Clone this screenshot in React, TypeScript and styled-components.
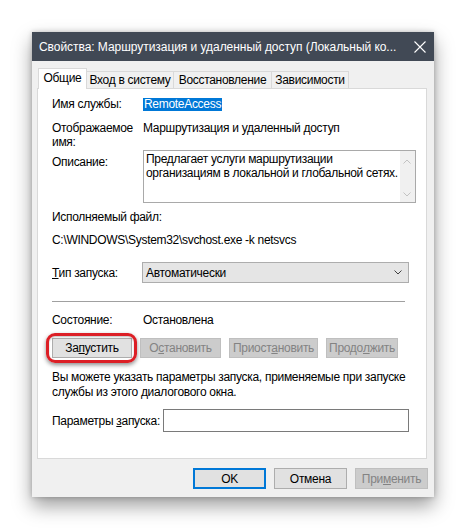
import React from "react";
import styled, { createGlobalStyle } from "styled-components";

const Global = createGlobalStyle`
  html, body { margin: 0; padding: 0; background: #ffffff; }
  body {
    font-family: "Liberation Sans", Arial, sans-serif;
    font-size: 12px;
    letter-spacing: -0.3px;
    color: #000;
  }
  * { box-sizing: border-box; }
`;

const Page = styled.div`
  width: 466px;
  height: 529px;
  padding: 32px 0 0 32px;
  overflow: hidden;
`;

const Window = styled.div`
  width: 402px;
  height: 465px;
  background: #f0f0f0;
  box-shadow: 0 9px 18px rgba(0, 0, 0, 0.38), 0 0 5px rgba(0, 0, 0, 0.22);
  display: flex;
  flex-direction: column;
`;

const TitleBar = styled.div`
  height: 29px;
  flex: none;
  background: #414955;
  color: #ffffff;
  display: flex;
  align-items: center;
  justify-content: space-between;
  padding: 0 8px 0 7px;
`;

const TitleText = styled.span`
  font-size: 12px;
  letter-spacing: -0.05px;
  white-space: nowrap;
`;

const Body = styled.div`
  flex: 1;
  display: flex;
  flex-direction: column;
  padding: 7px 7px 8px 5px;
`;

const TabStrip = styled.div`
  display: flex;
  align-items: flex-end;
  height: 21px;
  padding-left: 2px;
  margin-bottom: -1px;
  position: relative;
  z-index: 1;
`;

const Tab = styled.div<{ $active?: boolean; $w: number }>`
  width: ${(p) => p.$w}px;
  height: ${(p) => (p.$active ? "21px" : "18px")};
  padding: 0 0 ${(p) => (p.$active ? "2px" : "0")};
  display: flex;
  align-items: center;
  justify-content: center;
  background: ${(p) => (p.$active ? "#ffffff" : "#f0f0f0")};
  border: 1px solid #d9d9d9;
  border-bottom: ${(p) => (p.$active ? "none" : "1px solid #d9d9d9")};
  margin-left: -1px;
  white-space: nowrap;
`;

const Panel = styled.div`
  flex: 1;
  background: #ffffff;
  border: 1px solid #d9d9d9;
  padding: 0 17px 0 14px;
  display: flex;
  flex-direction: column;
`;

const Row = styled.div<{ $mt: number }>`
  display: flex;
  align-items: flex-start;
  margin-top: ${(p) => p.$mt}px;
  line-height: 14px;
`;

const Label = styled.div<{ $pt?: number }>`
  width: 90px;
  flex: none;
  padding-top: ${(p) => p.$pt || 0}px;
  white-space: nowrap;
`;

const Value = styled.div`
  padding-left: 1px;
  white-space: nowrap;
`;

const Selected = styled.span`
  background: #0078d7;
  color: #ffffff;
  padding: 0 1px;
  display: inline-block;
  line-height: 13px;
`;

const TextArea = styled.div`
  flex: 1;
  height: 53px;
  margin-left: 1px;
  border: 1px solid #a9a9a9;
  display: flex;
`;

const TextAreaText = styled.div`
  flex: 1;
  padding: 1px 2px;
  line-height: 14px;
  white-space: nowrap;
`;

const ScrollBar = styled.div`
  width: 15px;
  flex: none;
  background: #f0f0f0;
  display: flex;
  flex-direction: column;
  justify-content: space-between;
  align-items: center;
  padding: 8px 0 5px;
`;

const Line = styled.div<{ $mt: number }>`
  margin-top: ${(p) => p.$mt}px;
  line-height: 14px;
  white-space: nowrap;
`;

const Combo = styled.div`
  flex: 1;
  height: 21px;
  background: #e5e5e5;
  border: 1px solid #adadad;
  display: flex;
  align-items: center;
  justify-content: space-between;
  padding: 0 6px 0 3px;
`;

const CenterRow = styled.div<{ $mt: number }>`
  display: flex;
  align-items: center;
  justify-content: space-between;
  margin-top: ${(p) => p.$mt}px;
  white-space: nowrap;
`;

const Separator = styled.div`
  height: 1px;
  background: #a0a0a0;
  margin: 18px 4px 0 0;
`;

const ButtonRow = styled.div<{ $mt?: number }>`
  display: flex;
  gap: 8px;
  margin-top: ${(p) => p.$mt || 0}px;
`;

const Button = styled.div<{ $w: number; $disabled?: boolean; $default?: boolean; $h?: number }>`
  position: relative;
  width: ${(p) => p.$w}px;
  height: ${(p) => p.$h || 20}px;
  display: flex;
  align-items: center;
  justify-content: center;
  background: ${(p) => (p.$disabled ? "#cccccc" : "#e1e1e1")};
  border: ${(p) =>
    p.$default ? "2px solid #0078d7" : p.$disabled ? "1px solid #bfbfbf" : "1px solid #adadad"};
  color: ${(p) => (p.$disabled ? "#838383" : "#000")};
  white-space: nowrap;
`;

const Highlight = styled.div`
  position: absolute;
  left: -7px;
  top: -6px;
  right: -6px;
  bottom: -6px;
  border: 3px solid #dc1f26;
  border-radius: 9px;
  box-shadow: 0 2px 4px rgba(0, 0, 0, 0.45), inset 0 1px 2px rgba(0, 0, 0, 0.25);
  pointer-events: none;
`;

const Para = styled.div`
  margin-top: 12px;
  line-height: 15px;
  white-space: nowrap;
`;

const Input = styled.div`
  width: 246px;
  height: 23px;
  border: 1px solid #7a7a7a;
  background: #ffffff;
`;

const Footer = styled.div`
  display: flex;
  justify-content: flex-end;
  gap: 8px;
  margin-top: 9px;
  margin-right: -1px;
`;

const Mn = styled.span`
  text-decoration: underline;
  text-underline-offset: 1px;
`;

const Chevron = ({ up, color }: { up?: boolean; color: string }) => (
  <svg width="8" height="5" viewBox="0 0 8 5">
    <path
      d={up ? "M0.5 4.5 L4 1 L7.5 4.5" : "M0.5 0.5 L4 4 L7.5 0.5"}
      fill="none"
      stroke={color}
      strokeWidth="1"
    />
  </svg>
);

const CloseIcon = () => (
  <svg width="12" height="12" viewBox="0 0 12 12">
    <path d="M0.5 0.5 L11.5 11.5 M11.5 0.5 L0.5 11.5" stroke="#fff" strokeWidth="1.1" />
  </svg>
);

export default function App() {
  return (
    <>
      <Global />
      <Page>
        <Window>
          <TitleBar>
            <TitleText>Свойства: Маршрутизация и удаленный доступ (Локальный ко...</TitleText>
            <CloseIcon />
          </TitleBar>
          <Body>
            <TabStrip>
              <Tab $active $w={49}>
                Общие
              </Tab>
              <Tab $w={88}>Вход в систему</Tab>
              <Tab $w={99}>Восстановление</Tab>
              <Tab $w={78}>Зависимости</Tab>
            </TabStrip>
            <Panel>
              <Row $mt={8}>
                <Label>Имя службы:</Label>
                <Value>
                  <Selected>RemoteAccess</Selected>
                </Value>
              </Row>
              <Row $mt={10}>
                <Label>
                  Отображаемое
                  <br />
                  имя:
                </Label>
                <Value>Маршрутизация и удаленный доступ</Value>
              </Row>
              <Row $mt={1}>
                <Label $pt={5}>Описание:</Label>
                <TextArea>
                  <TextAreaText>
                    Предлагает услуги маршрутизации
                    <br />
                    организациям в локальной и глобальной сетях.
                  </TextAreaText>
                  <ScrollBar>
                    <Chevron up color="#c2c2c2" />
                    <Chevron color="#c2c2c2" />
                  </ScrollBar>
                </TextArea>
              </Row>
              <Line $mt={7}>Исполняемый файл:</Line>
              <Line $mt={9}>C:\WINDOWS\System32\svchost.exe -k netsvcs</Line>
              <CenterRow $mt={15}>
                <Label>
                  <Mn>Т</Mn>ип запуска:
                </Label>
                <Combo>
                  <span>Автоматически</span>
                  <Chevron color="#404040" />
                </Combo>
              </CenterRow>
              <Separator />
              <Row $mt={11}>
                <Label>Состояние:</Label>
                <Value>Остановлена</Value>
              </Row>
              <ButtonRow $mt={11}>
                <Button $w={80}>
                  За<Mn>п</Mn>устить
                  <Highlight />
                </Button>
                <Button $w={81} $disabled>
                  О<Mn>с</Mn>тановить
                </Button>
                <Button $w={89} $disabled>
                  Приост<Mn>а</Mn>новить
                </Button>
                <Button $w={72} $disabled>
                  Продо<Mn>л</Mn>жить
                </Button>
              </ButtonRow>
              <Para>
                Вы можете указать параметры запуска, применяемые при запуске
                <br />
                службы из этого диалогового окна.
              </Para>
              <CenterRow $mt={9}>
                <span>
                  Параметры <Mn>з</Mn>апуска:
                </span>
                <Input />
              </CenterRow>
            </Panel>
            <Footer>
              <Button $w={73} $h={21} $default>
                OK
              </Button>
              <Button $w={73} $h={21}>
                Отмена
              </Button>
              <Button $w={73} $h={21} $disabled>
                При<Mn>м</Mn>енить
              </Button>
            </Footer>
          </Body>
        </Window>
      </Page>
    </>
  );
}
